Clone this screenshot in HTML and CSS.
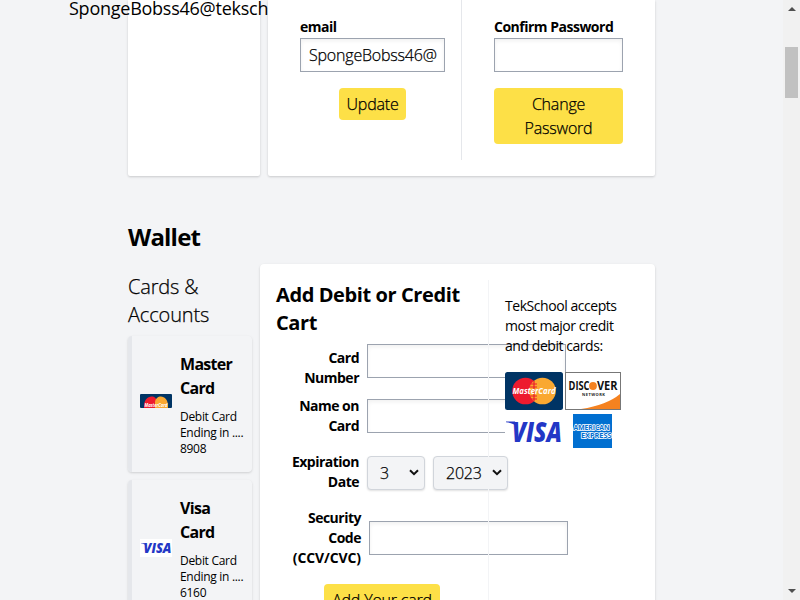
FILE: index.html
```html
<!DOCTYPE html>
<html lang="en">
<head>
<meta charset="utf-8">
<title>Account</title>
<link rel="stylesheet" href="styles.css">
</head>
<body>
<div class="window">
  <main class="page">
    <section class="profile">
      <div class="panel profile-side"><p class="profile-email">SpongeBobss46@teksch</p></div>
      <div class="panel profile-forms">
        <div class="field-col email-col">
          <label>email</label>
          <div class="input"><span>SpongeBobss46@</span></div>
          <button class="btn update">Update</button>
        </div>
        <div class="field-col password-col">
          <label class="confirm">Confirm Password</label>
          <div class="input"></div>
          <button class="btn change">Change<br>Password</button>
        </div>
      </div>
    </section>
    <h1>Wallet</h1>
    <section class="wallet">
      <aside>
        <h2>Cards &amp;<br>Accounts</h2>
        <article class="saved">
          <svg class="thumb" width="32" height="14" viewBox="0 0 32 14"><rect width="32" height="14" rx="1" fill="#003464"/><path d="M4 14C3 0 17 0 17 8v6z" fill="#ed1b2e"/><path d="M15 14V8C16 0 29 0 28 14z" fill="#faa831"/><text x="16" y="13" text-anchor="middle" textLength="23" lengthAdjust="spacingAndGlyphs" class="logo-tiny">MasterCard</text></svg>
          <div><h3>Master<br>Card</h3><p>Debit Card<br>Ending in ....<br>8908</p></div>
        </article>
        <article class="saved">
          <svg class="thumb visa-thumb" width="32" height="18" viewBox="0 0 32 18"><rect width="32" height="18" fill="#fff"/><path d="M1 4.200h4.500l1.500 3C5.500 5.500 3 4.800 1 4.600z" fill="#2337c6"/><text x="3.500" y="13.800" textLength="28" lengthAdjust="spacingAndGlyphs" class="logo-visa small">VISA</text></svg>
          <div><h3>Visa<br>Card</h3><p>Debit Card<br>Ending in ....<br>6160</p></div>
        </article>
      </aside>
      <div class="panel add-card">
        <div class="form">
          <h2>Add Debit or Credit<br>Cart</h2>
          <div class="row number"><label>Card<br>Number</label><div class="input"></div></div>
          <div class="row name"><label>Name on<br>Card</label><div class="input"></div></div>
          <div class="row expiry"><label>Expiration<br>Date</label>
            <div class="select month"><span>3</span><svg width="10" height="7" viewBox="0 0 10 7"><path d="M1 1.200l4 4 4-4"/></svg></div>
            <div class="select year"><span>2023</span><svg width="10" height="7" viewBox="0 0 10 7"><path d="M1 1.200l4 4 4-4"/></svg></div>
          </div>
          <div class="row security"><label>Security<br>Code<br><span class="ccv">(CCV/CVC)</span></label><div class="input"></div></div>
          <button class="btn add">Add Your card</button>
        </div>
        <div class="accepted">
          <p>TekSchool accepts<br>most major credit<br>and debit cards:</p>
          <div class="logos">
            <svg width="58" height="38" viewBox="0 0 58 38"><rect width="58" height="38" rx="2.500" fill="#003464"/><circle cx="20.500" cy="19" r="13.300" fill="#ed1b2e"/><circle cx="37.500" cy="19" r="13.300" fill="#faa831"/><path d="M29 9v20M26 12h6M25 15h7M25 24h7M26 27h6" stroke="#ed1b2e" stroke-width="1.200"/><text x="29" y="22" text-anchor="middle" textLength="43" lengthAdjust="spacingAndGlyphs" class="logo-mc">MasterCard</text></svg>
            <svg width="56" height="38" viewBox="0 0 56 38"><rect x=".5" y=".5" width="55" height="37" fill="#fff" stroke="#777"/><path d="M16 37Q42 33 55 22v15z" fill="#f58220"/><text x="3.500" y="18" textLength="21" lengthAdjust="spacingAndGlyphs" class="logo-disc">DISC</text><circle cx="28" cy="14" r="3.900" fill="#f58220"/><text x="32" y="18" textLength="20.500" lengthAdjust="spacingAndGlyphs" class="logo-disc">VER</text><text x="17" y="24" textLength="23" class="logo-net">NETWORK</text></svg>
            <svg width="58" height="40" viewBox="0 0 58 40"><path d="M1 11.500h9l3 7C10 14 6 12.700 1 12.200z" fill="#2337c6"/><text x="7" y="32" textLength="50" lengthAdjust="spacingAndGlyphs" class="logo-visa">VISA</text></svg>
            <svg width="56" height="40" viewBox="0 0 56 40"><rect x="8" y="4" width="39" height="34" fill="#016fd0"/><text x="8.500" y="20" textLength="36" lengthAdjust="spacingAndGlyphs" class="logo-amex">AMERICAN</text><text x="16" y="27.500" textLength="30.500" lengthAdjust="spacingAndGlyphs" class="logo-amex">EXPRESS</text></svg>
          </div>
        </div>
      </div>
    </section>
  </main>
  <div class="scrollbar"><i class="arrow up"></i><i class="grip"></i><i class="arrow down"></i></div>
</div>
</body>
</html>
```
FILE: styles.css
```css
* { box-sizing: border-box; }
body { margin: 0; height: 600px; overflow: hidden; font: 300 16px/24px "Open Sans", "Noto Sans", sans-serif; letter-spacing: -.2px; color: #000; background: #f3f4f6; }
h1, h2, h3, p { margin: 0; white-space: nowrap; }
svg { display: block; letter-spacing: 0; }
.window { display: flex; height: 600px; overflow: hidden; }
.page { flex: 1; padding-left: 128px; min-width: 0; }
.panel { background: #fff; box-shadow: 0 1px 3px rgba(0,0,0,.1), 0 1px 2px rgba(0,0,0,.08); border-radius: 4px; }
.profile { display: flex; gap: 8px; height: 176px; }
.profile .panel { border-radius: 0 0 2px 2px; }
.profile-side { width: 132px; }
.profile-email { margin: -6px 0 0 -59px; font-size: 18px; line-height: 28px; font-weight: 500; width: 199px; letter-spacing: -.25px; }
.profile-forms { width: 387px; display: flex; position: relative; padding: 0 32px; }
.field-col { display: flex; flex-direction: column; align-items: center; height: 160px; padding-top: 17px; }
.email-col { width: 162px; padding-right: 16px; border-right: 1px solid #e5e7eb; }
.password-col { width: 161px; padding-left: 32px; }
label { font-size: 14px; line-height: 20px; font-weight: 700; white-space: nowrap; align-self: flex-start; letter-spacing: -.5px; }
.input { height: 34px; width: 100%; border: 1px solid #9ca3af; padding: 4px 8px; line-height: 24px; white-space: nowrap; background: #fff; box-shadow: inset 0 2px 4px rgba(0,0,0,.06); }
.input, .btn, .select span, aside h2 { -webkit-text-stroke: .25px #000; }
.field-col .input { margin-top: 1px; flex: none; }
.btn { border: 0; border-radius: 4px; background: #fde047; font: inherit; letter-spacing: inherit; color: #000; padding: 4px 0; white-space: nowrap; }
.update { width: 67px; margin-top: 16px; }
.change { width: 129px; margin-top: 16px; }
h1 { margin-top: 45px; font-size: 24px; line-height: 32px; font-weight: 700; letter-spacing: -.8px; }
.wallet { display: flex; gap: 8px; margin-top: 11px; }
aside { width: 124px; padding-top: 9px; }
h2 { font-size: 20px; line-height: 28px; }
aside h2 { font-weight: 300; margin-bottom: 7px; letter-spacing: -.15px; }
.saved { display: flex; align-items: center; gap: 8px; height: 136px; padding: 2px 0 0 8px; margin-bottom: 8px; border-left: 4px solid #e5e7eb; border-radius: 4px; box-shadow: 0 1px 3px rgba(0,0,0,.1), 0 1px 2px rgba(0,0,0,.06); }
.thumb { flex: none; position: relative; top: -4px; }
.visa-thumb { top: -1px; }
h3 { font-size: 16px; line-height: 24px; font-weight: 700; letter-spacing: -.7px; margin-top: -1px; }
.saved p { font-size: 12px; line-height: 16px; font-weight: 400; margin-top: 9px; letter-spacing: -.3px; }
.add-card { display: flex; width: 395px; height: 380px; padding: 16px; }
.form { width: 212px; height: 380px; padding-top: 1px; flex: none; }
.form h2 { font-weight: 700; letter-spacing: -.4px; }
.row { display: flex; gap: 8px; align-items: flex-start; }
.row label { width: 83px; text-align: right; padding-top: 4px; flex: none; }
.row .input { width: 199px; flex: none; }
.number { margin-top: 7px; height: 55px; }
.name { height: 57px; }
.row.name label { padding-top: 0; margin-top: -3px; }
.expiry { height: 65px; }
.row.expiry label { padding-top: 0; margin-top: -4px; }
.security { height: 63px; }
.row.security label { width: 85px; padding-top: 0; margin-top: -13px; }
.ccv { letter-spacing: -.1px; }
.select { display: flex; align-items: center; justify-content: space-between; height: 34px; padding: 0 5px 0 12px; border: 1px solid #d1d5db; border-radius: 4px; background: #f3f4f6; box-shadow: 0 1px 2px rgba(0,0,0,.12); flex: none; }
.select svg { margin-top: -1px; }
.select path { fill: none; stroke: #111; stroke-width: 2; }
.month { width: 58px; }
.year { width: 75px; }
.add { width: 116px; margin-left: 48px; }
.accepted { position: relative; width: 151px; padding: 16px 0 0 16px; border-left: 1px solid #f3f4f6; flex: none; }
.accepted p { font-size: 14px; line-height: 20px; font-weight: 400; letter-spacing: -.45px; }
.logos { display: grid; grid-template-columns: 58px 56px; column-gap: 2px; width: 116px; margin-top: 16px; background: #fff; }
.logo-mc { font: italic 700 8px "Open Sans", sans-serif; fill: #fff; }
.logo-tiny { font: italic 700 5px "Open Sans", sans-serif; fill: #fff; }
.logo-visa { font: italic 800 29px "Open Sans", sans-serif; fill: #2337c6; }
.logo-visa.small { font-size: 14px; }
.logo-disc { font: 700 12px "Open Sans", sans-serif; fill: #111; }
.logo-net { font: 700 4px "Open Sans", sans-serif; fill: #222; }
.logo-amex { font: 700 7px "Open Sans", sans-serif; fill: #016fd0; stroke: #fff; stroke-width: 1.400px; paint-order: stroke; }
.scrollbar { width: 17px; background: #f1f1f1; display: flex; flex-direction: column; align-items: center; height: 600px; }
.arrow { width: 0; height: 0; border-left: 4px solid transparent; border-right: 4px solid transparent; }
.up { border-bottom: 4px solid #505050; margin-top: 7px; }
.down { border-top: 4px solid #505050; margin: auto 0 7px; }
.grip { width: 13px; height: 51px; background: #c1c1c1; margin-top: 36px; }
```
